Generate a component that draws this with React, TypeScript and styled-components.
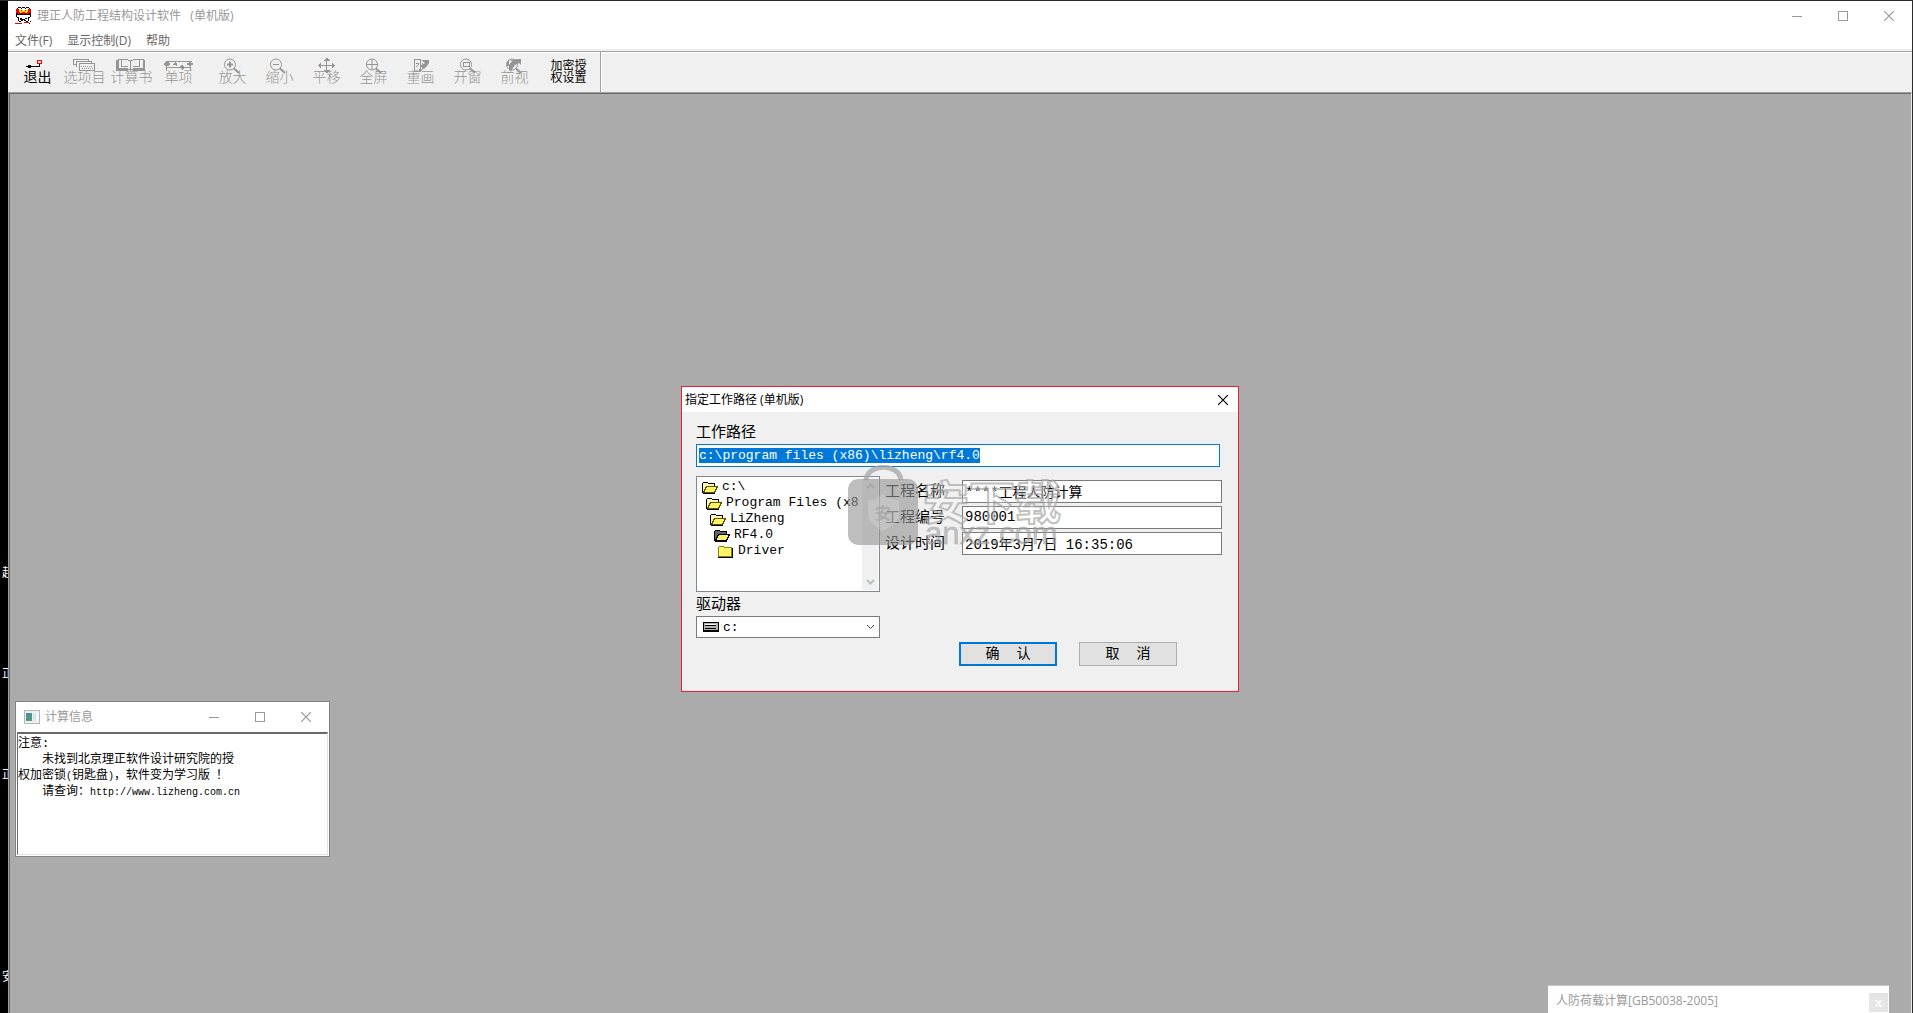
import React, { useEffect, useRef } from "react";
import styled, { createGlobalStyle, css } from "styled-components";

const ui = `"Open Sans", "Noto Sans CJK SC", sans-serif`;
const song = `"Liberation Mono", "Noto Sans CJK SC", monospace`;

const GlobalStyle = createGlobalStyle`
  *, *::before, *::after { box-sizing: border-box; }
  body { margin: 0; background: #000; font-family: ${ui}; font-size: 12px; }
  button, input, select { font: inherit; color: inherit; margin: 0; }
`;

/* ---------- shell ---------- */

const Desktop = styled.div`
  display: flex;
  height: 100vh;
  overflow: hidden;
  padding: 1px 1px 0 0;
  background: #2b2b2d;
`;

const DesktopEdge = styled.div`
  flex: none;
  width: 8px;
  overflow: hidden;
  padding: 521px 0 0 2px;
  background: #000;
  color: #fff;
`;

const ShortcutLabel = styled.div`
  height: 101px;
  line-height: 101px;
  white-space: nowrap;
`;

const AppWindow = styled.main`
  flex: 1;
  min-width: 0;
  display: flex;
  flex-direction: column;
  background: #fff;
`;

const TitleBar = styled.header<{ $height: number; $inset: number }>`
  display: flex;
  align-items: center;
  height: ${(p) => p.$height}px;
  padding-left: ${(p) => p.$inset}px;
  background: #fff;
  color: #999;
  & > svg { margin-right: 5px; }
`;

const TitleText = styled.h1`
  flex: 1;
  margin: 0;
  font-size: 12px;
  font-weight: 400;
  line-height: 16px;
  white-space: pre;
`;

const CaptionButton = styled.button`
  display: flex;
  align-items: center;
  justify-content: center;
  width: 46px;
  height: 28px;
  padding: 0;
  border: 0;
  background: transparent;
`;

const MenuBar = styled.nav`
  display: flex;
  gap: 15px;
  margin-top: 3px;
  padding-left: 7px;
  color: #666;
`;

const MenuItem = styled.button`
  padding: 0;
  border: 0;
  background: transparent;
  line-height: 16px;
`;

const ToolStrip = styled.div`
  padding-top: 2px;
  background: #f0f0f0;
`;

const ToolStripInner = styled.div`
  display: flex;
  height: 41px;
  border-top: 1px solid #a0a0a0;
  box-shadow: inset 0 1px 0 #fff;
`;

const ToolBar = styled.div`
  display: flex;
  gap: 7px;
  padding: 1px 8px 0 6px;
  border-right: 1px solid #a0a0a0;
  box-shadow: inset 0 1px 0 #fff, 1px 0 0 #fff;
`;

const ToolGroup = styled.div`
  display: flex;
`;

const ToolButton = styled.button`
  display: flex;
  flex-direction: column;
  align-items: center;
  width: 47px;
  padding: 5px 0 0;
  border: 0;
  background: transparent;
  color: #000;
  font-size: 14px;
  line-height: 14px;
  white-space: nowrap;
  &:disabled { color: #959595; font-weight: 300; }
`;

const ToolIcon = styled.svg`
  flex: none;
  width: 32px;
  height: 12px;
  overflow: visible;
  fill: none;
  stroke: currentColor;
`;

const TextToolButton = styled(ToolButton)`
  padding-top: 7px;
  font-size: 12px;
  line-height: 12px;
`;

const Workspace = styled.section`
  position: relative;
  flex: 1;
  border: 1px solid #a0a0a0;
  border-right-color: #e9e9e9;
  border-bottom: 0;
  background: #ababab;
  box-shadow: inset 1px 1px 0 #696969;
`;

/* ---------- calculation info window ---------- */

const InfoWindow = styled.section`
  position: absolute;
  left: 6px;
  bottom: 156px;
  width: 315px;
  border: 1px solid #828282;
  background: #fff;
`;

const InfoBody = styled.div`
  height: 123px;
  margin: 0 1px 1px;
  padding: 2px 0;
  border: 1px solid #e3e3e3;
  border-top: 2px solid #696969;
  border-left-color: #696969;
  color: #000;
  font-family: ${song};
  line-height: 16px;
`;

const InfoLine = styled.p<{ $indent?: boolean }>`
  height: 16px;
  margin: 0;
  padding-left: ${(p) => (p.$indent ? 24 : 0)}px;
  white-space: nowrap;
`;

const Latin = styled.span`
  font-size: 10px;
`;

/* ---------- load calculation palette ---------- */

const Palette = styled.section`
  position: absolute;
  right: 22px;
  bottom: 0;
  display: flex;
  align-items: center;
  width: 341px;
  height: 28px;
  padding: 2px 1px 0 8px;
  border-top: 1px solid #c4c4c4;
  background: #fff;
  color: #999;
`;

const PaletteClose = styled.button`
  width: 19px;
  height: 19px;
  margin-top: 4px;
  padding: 0;
  border: 0;
  background: #e5e5e5;
  color: #fafafa;
  font-weight: 700;
  line-height: 16px;
`;

/* ---------- work path dialog ---------- */

const Dialog = styled.section`
  position: absolute;
  left: 50%;
  top: 293px;
  width: 558px;
  transform: translateX(-50%);
  border: 1px solid #e81f35;
  background: #f0f0f0;
  color: #000;
`;

const DialogTitle = styled(TitleBar)`
  color: #000;
`;

const DialogClose = styled(CaptionButton)`
  width: 30px;
  height: 25px;
`;

const DialogBody = styled.form`
  padding: 10px 16px 25px 14px;
  font-family: ${song};
  font-size: 15px;
`;

const FieldLabel = styled.label`
  display: block;
  padding-top: 2px;
  line-height: 20px;
`;

const box = css`
  height: 23px;
  border: 1px solid #7a7a7a;
  border-radius: 0;
  background: #fff;
  outline: 0;
`;

const PathInput = styled.input`
  ${box}
  display: block;
  width: calc(100% - 2px);
  padding: 0 2px 1px;
  border-color: #0078d7;
  font-size: 13px;
  &::selection { background: #0078d7; color: #fff; }
`;

const Columns = styled.div`
  display: grid;
  grid-template-columns: 184px 1fr;
  column-gap: 5px;
  margin-top: 9px;
`;

const FolderBox = styled.div`
  display: flex;
  height: 116px;
  margin-bottom: 2px;
  padding: 1px;
  border: 1px solid #828790;
  background: #fff;
`;

const FolderList = styled.ul`
  flex: 1;
  min-width: 0;
  margin: 0;
  padding: 1px 0 0 4px;
  overflow: hidden;
  list-style: none;
  font-size: 13px;
  line-height: 16px;
`;

const FolderRow = styled.li<{ $depth: number }>`
  display: flex;
  align-items: center;
  gap: 4px;
  height: 16px;
  padding-left: ${(p) => p.$depth * 4}px;
  white-space: nowrap;
`;

const FolderSvg = styled.svg`
  flex: none;
  width: 16px;
  height: 13px;
`;

const ScrollTrack = styled.div`
  display: flex;
  flex-direction: column;
  justify-content: space-between;
  align-items: center;
  width: 16px;
  padding: 5px 0;
  background: #f0f0f0;
`;

const DriveField = styled.div`
  display: grid;
  grid-template-columns: 26px 1fr 13px;
  align-items: center;
  ${box}
  height: 22px;
  & > svg { grid-row: 1; }
  & > svg:first-of-type { grid-column: 1; margin-left: 6px; }
  & > svg:last-of-type { grid-column: 3; pointer-events: none; z-index: 1; }
`;

const DriveSelect = styled.select`
  grid-column: 1 / -1;
  grid-row: 1;
  height: 20px;
  padding: 0 0 0 26px;
  border: 0;
  outline: 0;
  appearance: none;
  background: transparent;
  font-size: 13px;
`;

const Details = styled.div`
  display: flex;
  flex-direction: column;
  gap: 3px;
  padding-top: 4px;
`;

const DetailRow = styled.div`
  display: grid;
  grid-template-columns: 77px 1fr;
  & > label { padding-top: 3px; line-height: 20px; }
`;

const DetailInput = styled.input`
  ${box}
  min-width: 0;
  padding: 0 2px 2px;
  font-size: 14px;
`;

const Actions = styled.div`
  display: flex;
  gap: 22px;
  padding: 84px 0 0 74px;
`;

const ActionButton = styled.button<{ $primary?: boolean }>`
  width: 98px;
  height: 24px;
  padding: 0 0 1px;
  border: ${(p) => (p.$primary ? "2px solid #0078d7" : "1px solid #adadad")};
  background: #e1e1e1;
  font-size: 14px;
  line-height: 18px;
  white-space: pre;
`;

/* ---------- watermark ---------- */

const Watermark = styled.div`
  position: absolute;
  left: 166px;
  top: 78px;
  display: flex;
  gap: 5px;
  pointer-events: none;
`;

const WatermarkWords = styled.div`
  padding-top: 11px;
  white-space: nowrap;
`;

const WatermarkName = styled.div`
  height: 46px;
  color: rgba(255, 255, 255, 0.25);
  -webkit-text-stroke: 2px rgba(165, 165, 165, 0.7);
  font: 700 46px/46px "Noto Sans CJK SC", sans-serif;
`;

const WatermarkSite = styled.div`
  padding-left: 2px;
  color: rgba(160, 160, 160, 0.6);
  -webkit-text-stroke: 1px rgba(160, 160, 160, 0.4);
  font: 400 31px/24px "Liberation Sans", sans-serif;
`;

/* ---------- drawings ---------- */

const Minimize = () => (
  <svg width="10" height="10" shapeRendering="crispEdges"><path d="M0 5.5H10" stroke="#999" /></svg>
);
const Maximize = () => (
  <svg width="10" height="10" shapeRendering="crispEdges"><rect x=".5" y=".5" width="9" height="9" fill="none" stroke="#999" /></svg>
);
const Cross = ({ color = "#999" }: { color?: string }) => (
  <svg width="10" height="10"><path d="M0 0L10 10M10 0L0 10" stroke={color} strokeWidth="1.2" /></svg>
);

const Captions = () => (
  <>
    <CaptionButton aria-label="最小化"><Minimize /></CaptionButton>
    <CaptionButton aria-label="最大化"><Maximize /></CaptionButton>
    <CaptionButton aria-label="关闭"><Cross /></CaptionButton>
  </>
);

const AppIcon = () => (
  <svg width="17" height="17" viewBox="0 0 17 17" shapeRendering="crispEdges">
    <path d="M3 0h3v1H3zM7 0h3v1H7zM11 0h3v1h-3zM2 1h1v1H2zM14 1h1v1h-1zM6 1h1v1H6zM10 1h1v1h-1z" fill="#000" />
    <path d="M1 2h3v1h9V2h3v4h-2v1H3V6H1z" fill="#f00" />
    <path d="M4 3h2v1h1V3h3v1h1V3h2v2h-1v1h-2V5H7v1H5V5H4z" fill="#ffe100" />
    <path d="M5 2h1v1H5zM8 3h1v1H8zM11 2h1v1h-1z" fill="#fff" />
    <path d="M1 6h2v1h3v1H2v2h2v1H2v-1H1zM6 6h1v2H6zM10 6h1v2h-1zM11 7h3V6h2v4h-1v1h-2v-1h2V8h-4zM7 7h3v1H7z" fill="#000" />
    <path d="M3 11h1v3H3zM13 11h1v3h-1zM5 11h2v1h3v-1h2v1h-2v1h1v1H9v-1H8v1H6v-1H5zM4 14h2v1H4zM11 14h2v1h-2z" fill="#000" />
    <path d="M0 16h7v1H0zM9 15h5v1H9z" fill="#f00" />
    <path d="M15 14h1v1h-1zM14 16h1v1h-1z" fill="#000" />
  </svg>
);

const InfoIcon = () => (
  <svg width="16" height="14" viewBox="0 0 16 14" shapeRendering="crispEdges">
    <rect x=".5" y=".5" width="15" height="13" fill="#eef0f2" stroke="#b4b8bc" />
    <rect x="2" y="3" width="6" height="8" fill="#4d9a82" />
    <path d="M2 3h4v3H2z" fill="#5686b4" />
    <path d="M9 3h3v8H9z" fill="#dfe3e6" />
    <path d="M13 3h1v8h-1z" fill="#fff" />
  </svg>
);

const Glass = ({ children }: { children?: React.ReactNode }) => (
  <>
    <circle cx="13" cy="6.5" r="5.5" />
    <path d="M17 10.5l5 4.5" strokeWidth="2" />
    {children}
  </>
);

const drawings: Record<string, React.ReactNode> = {
  exit: (
    <g shapeRendering="crispEdges">
      <path d="M5 8.5H17.5V6" />
      <path d="M4 8h2v-1h3v3H6V9H4z" fill="currentColor" stroke="none" />
      <rect x="15.5" y="2.5" width="4" height="3" stroke="#f00" />
    </g>
  ),
  items: (
    <g shapeRendering="crispEdges">
      <path d="M4.500 7V1.500H19.500V3M7.500 9V3.500H22.500V5" />
      <path d="M4.500 6.500H7" />
      <path d="M10.500 5.500H25.500V12H10.500z" />
      <path d="M12 8.500H24M13 10.500H24" strokeDasharray="1 1" />
    </g>
  ),
  book: (
    <g shapeRendering="crispEdges" transform="translate(-1 0)">
      <path d="M3 1.500H12L15.500 3L19 1.500H28V10.500H19L15.500 12L12 10.500H3z" />
      <path d="M2 2V12H13M29 2V12H18" strokeWidth="2" />
      <path d="M15.500 3V12M6.500 2V8H13M24.500 2V8H18" />
    </g>
  ),
  single: (
    <g shapeRendering="crispEdges">
      <path d="M3.500 3.500H29M3.500 3V13M27.500 3V13M3.500 9.500H27.500" />
      <path d="M0 6l3-2h2l3 2l-3 2H3zM8 6h2l2-2l2 2v2l-2-1zM16 9l3-2l3 2l-3 3zM23 6l4-2l4 2l-4 2z" fill="currentColor" stroke="none" />
    </g>
  ),
  zoomIn: <Glass><path d="M10 6.500H16M13 3.500V9.500" strokeWidth="2" /></Glass>,
  zoomOut: <g transform="translate(-1 0)"><Glass><path d="M10 6.500H16" /></Glass></g>,
  pan: (
    <g shapeRendering="crispEdges" transform="translate(-1 0)">
      <path d="M16.500 1V14M9 7.500H24" />
      <path d="M16 0h1l3 3h-7zM8 7.500l3-3v6zM25 7.500l-3-3v6zM13 12h7l-3 3h-1z" fill="currentColor" stroke="none" />
    </g>
  ),
  full: <g transform="translate(1 0)"><Glass><path d="M7 6.500H19M13 1V12" /></Glass></g>,
  redraw: (
    <>
      <path d="M9.500 1.500H15.500V13.500H9.500zM11 5h3M11 9l3-3M14 13l4-8" shapeRendering="crispEdges" />
      <path d="M16 2h8v3l-2 3l-3 3l-2-1v-3l3-2z" fill="currentColor" stroke="none" />
      <path d="M15 14l3-4" />
    </>
  ),
  window: <g transform="translate(1 0)"><Glass><rect x="10.500" y="4.500" width="6" height="4" shapeRendering="crispEdges" /></Glass></g>,
  previous: (
    <Glass>
      <path d="M10 12V7l3-4h-3l8-2h4v6l-2-2l-4 2l-4 6z" fill="currentColor" stroke="none" />
      <path d="M9 3v5" strokeWidth="2" />
    </Glass>
  ),
};

const Folder = ({ kind }: { kind: "open" | "current" | "closed" }) => (
  <FolderSvg viewBox="0 0 16 13" shapeRendering="crispEdges">
    {kind === "closed" ? (
      <>
        <path d="M.5 11.500V2.500L1.500 1.500H5.500L6.500 2.500H13.500V11.500z" fill="#fff36a" stroke="#8b8400" />
        <path d="M0 12.500H14.500V3" fill="none" stroke="#000" />
      </>
    ) : (
      <>
        <path d="M.5 11.500V2.500L1.500 1.500H5.500L6.500 2.500H12.500V5.500" fill={kind === "current" ? "#666" : "#fff9b0"} stroke="#000" />
        <path d="M1.500 11.500L4.500 5.500H15.500L12.500 11.500z" fill="#fff36a" stroke={kind === "current" ? "#000" : "#5c5700"} />
        <path d="M1 12.500H13" stroke="#000" />
      </>
    )}
  </FolderSvg>
);

const DriveIcon = () => (
  <svg width="16" height="10" viewBox="0 0 16 10" shapeRendering="crispEdges">
    <rect x=".5" y=".5" width="15" height="8" fill="#b4b4b4" stroke="#000" />
    <path d="M2 3.500H13M2 6.500H13" stroke="#000" />
    <path d="M0 9.500H16" stroke="#000" />
    <path d="M2 2.500H13" stroke="#fff" />
  </svg>
);

const Chevron = ({ up, color, weight }: { up?: boolean; color: string; weight: number }) => (
  <svg width="9" height="6" viewBox="0 0 9 6">
    <path d={up ? "M1 5L4.500 1.500L8 5" : "M1 1L4.500 4.500L8 1"} fill="none" stroke={color} strokeWidth={weight} />
  </svg>
);

const LockMark = () => (
  <svg width="70" height="82" viewBox="0 0 70 82">
    <path d="M18 15C20 -2 51 -2 53 15" fill="none" stroke="rgba(165,165,165,.75)" strokeWidth="5" />
    <rect y="14" width="70" height="66" rx="10" fill="rgba(150,150,150,.62)" />
    <path d="M35 29C41 34 46 35 51 35V49C51 57 43 62 35 66C27 62 20 57 20 49V35C25 35 30 34 35 29z" fill="rgba(215,215,215,.35)" />
    <text x="35" y="54" textAnchor="middle" fontFamily="Noto Sans CJK SC, sans-serif" fontWeight="700" fontSize="16" fill="rgba(165,165,165,.8)">安</text>
  </svg>
);

/* ---------- data ---------- */

const projectTools = [
  { label: "退出", icon: "exit", enabled: true },
  { label: "选项目", icon: "items" },
  { label: "计算书", icon: "book" },
  { label: "单项", icon: "single" },
];

const viewTools = [
  { label: "放大", icon: "zoomIn" },
  { label: "缩小", icon: "zoomOut" },
  { label: "平移", icon: "pan" },
  { label: "全屏", icon: "full" },
  { label: "重画", icon: "redraw" },
  { label: "开窗", icon: "window" },
  { label: "前视", icon: "previous" },
];

const folders = [
  { name: "c:\\", kind: "open" },
  { name: "Program Files (x8", kind: "open" },
  { name: "LiZheng", kind: "open" },
  { name: "RF4.0", kind: "current" },
  { name: "Driver", kind: "closed" },
] as const;

const details = [
  { id: "project-name", label: "工程名称", value: "****工程人防计算" },
  { id: "project-code", label: "工程编号", value: "980001" },
  { id: "design-time", label: "设计时间", value: "2019年3月7日 16:35:06" },
];

const Tools = ({ items }: { items: { label: string; icon: string; enabled?: boolean }[] }) => (
  <ToolGroup>
    {items.map((tool) => (
      <ToolButton key={tool.label} disabled={!tool.enabled}>
        <ToolIcon viewBox="0 0 32 12">{drawings[tool.icon]}</ToolIcon>
        {tool.label}
      </ToolButton>
    ))}
  </ToolGroup>
);

const WorkPathDialog = () => {
  const path = useRef<HTMLInputElement>(null);
  useEffect(() => {
    path.current?.focus();
    path.current?.select();
  }, []);

  return (
    <Dialog role="dialog" aria-labelledby="dialog-title">
      <DialogTitle $height={25} $inset={3}>
        <TitleText as="h2" id="dialog-title">指定工作路径 (单机版)</TitleText>
        <DialogClose aria-label="关闭"><Cross color="#000" /></DialogClose>
      </DialogTitle>
      <DialogBody onSubmit={(e) => e.preventDefault()}>
        <FieldLabel htmlFor="work-path">工作路径</FieldLabel>
        <PathInput id="work-path" ref={path} spellCheck={false} defaultValue={"c:\\program files (x86)\\lizheng\\rf4.0"} />
        <Columns>
          <div>
            <FolderBox>
              <FolderList>
                {folders.map((folder, depth) => (
                  <FolderRow key={folder.name} $depth={depth}>
                    <Folder kind={folder.kind} />
                    {folder.name}
                  </FolderRow>
                ))}
              </FolderList>
              <ScrollTrack>
                <Chevron up color="#bfbfbf" weight={2} />
                <Chevron color="#bfbfbf" weight={2} />
              </ScrollTrack>
            </FolderBox>
            <FieldLabel htmlFor="drive">驱动器</FieldLabel>
            <DriveField>
              <DriveIcon />
              <DriveSelect id="drive" defaultValue="c:">
                <option>c:</option>
              </DriveSelect>
              <Chevron color="#444" weight={1} />
            </DriveField>
          </div>
          <Details>
            {details.map((d) => (
              <DetailRow key={d.id}>
                <label htmlFor={d.id}>{d.label}</label>
                <DetailInput id={d.id} defaultValue={d.value} />
              </DetailRow>
            ))}
            <Actions>
              <ActionButton $primary type="submit">{"确  认"}</ActionButton>
              <ActionButton type="button">{"取  消"}</ActionButton>
            </Actions>
          </Details>
        </Columns>
      </DialogBody>
      <Watermark aria-hidden="true">
        <LockMark />
        <WatermarkWords>
          <WatermarkName>安下载</WatermarkName>
          <WatermarkSite>anxz.com</WatermarkSite>
        </WatermarkWords>
      </Watermark>
    </Dialog>
  );
};

export default function App() {
  return (
    <>
      <GlobalStyle />
      <Desktop>
        <DesktopEdge>
          <ShortcutLabel>起</ShortcutLabel>
          <ShortcutLabel>正</ShortcutLabel>
          <ShortcutLabel>正</ShortcutLabel>
          <ShortcutLabel />
          <ShortcutLabel>安</ShortcutLabel>
        </DesktopEdge>
        <AppWindow>
          <TitleBar $height={29} $inset={7}>
            <AppIcon />
            <TitleText>{"理正人防工程结构设计软件   (单机版)"}</TitleText>
            <Captions />
          </TitleBar>
          <MenuBar>
            <MenuItem>文件(F)</MenuItem>
            <MenuItem>显示控制(D)</MenuItem>
            <MenuItem>帮助</MenuItem>
          </MenuBar>
          <ToolStrip>
            <ToolStripInner>
              <ToolBar role="toolbar">
                <Tools items={projectTools} />
                <Tools items={viewTools} />
                <TextToolButton>加密授<br />权设置</TextToolButton>
              </ToolBar>
            </ToolStripInner>
          </ToolStrip>
          <Workspace>
            <InfoWindow>
              <TitleBar $height={30} $inset={8}>
                <InfoIcon />
                <TitleText as="h2">计算信息</TitleText>
                <Captions />
              </TitleBar>
              <InfoBody>
                <InfoLine>注意:</InfoLine>
                <InfoLine $indent>未找到北京理正软件设计研究院的授</InfoLine>
                <InfoLine>权加密锁<Latin>(</Latin>钥匙盘<Latin>)</Latin>，软件变为学习版<Latin> </Latin>！</InfoLine>
                <InfoLine $indent>请查询：<Latin>http://www.lizheng.com.cn</Latin></InfoLine>
              </InfoBody>
            </InfoWindow>
            <WorkPathDialog />
            <Palette>
              <TitleText as="h2">人防荷载计算[GB50038-2005]</TitleText>
              <PaletteClose aria-label="关闭">x</PaletteClose>
            </Palette>
          </Workspace>
        </AppWindow>
      </Desktop>
    </>
  );
}
